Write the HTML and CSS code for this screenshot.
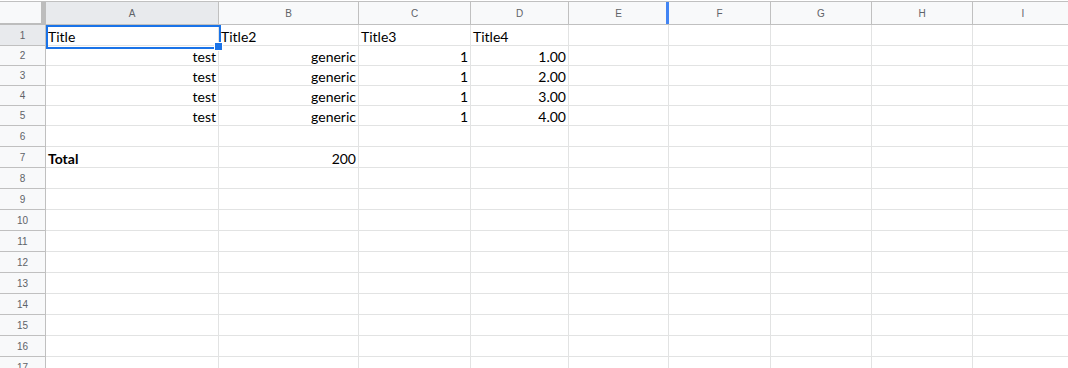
FILE: index.html
```html
<!DOCTYPE html>
<html lang="en">
<head>
  <meta charset="UTF-8" />
  <title>Sheet</title>
  <link rel="stylesheet" href="styles.css">
</head>
<body>
  <div class="sheet">
    <div class="row head">
      <div class="corner"></div>
      <div class="col sel">A</div>
      <div class="col">B</div>
      <div class="col">C</div>
      <div class="col">D</div>
      <div class="col resize">E</div>
      <div class="col">F</div>
      <div class="col">G</div>
      <div class="col">H</div>
      <div class="col">I</div>
    </div>
    <div class="row tall">
      <div class="num sel">1</div>
      <div class="cell active">Title</div>
      <div class="cell">Title2</div>
      <div class="cell">Title3</div>
      <div class="cell">Title4</div>
      <div class="cell"></div><div class="cell"></div><div class="cell"></div><div class="cell"></div><div class="cell"></div>
    </div>
    <div class="row">
      <div class="num">2</div>
      <div class="cell r">test</div>
      <div class="cell r">generic</div>
      <div class="cell r">1</div>
      <div class="cell r">1.00</div>
      <div class="cell"></div><div class="cell"></div><div class="cell"></div><div class="cell"></div><div class="cell"></div>
    </div>
    <div class="row">
      <div class="num">3</div>
      <div class="cell r">test</div>
      <div class="cell r">generic</div>
      <div class="cell r">1</div>
      <div class="cell r">2.00</div>
      <div class="cell"></div><div class="cell"></div><div class="cell"></div><div class="cell"></div><div class="cell"></div>
    </div>
    <div class="row">
      <div class="num">4</div>
      <div class="cell r">test</div>
      <div class="cell r">generic</div>
      <div class="cell r">1</div>
      <div class="cell r">3.00</div>
      <div class="cell"></div><div class="cell"></div><div class="cell"></div><div class="cell"></div><div class="cell"></div>
    </div>
    <div class="row">
      <div class="num">5</div>
      <div class="cell r">test</div>
      <div class="cell r">generic</div>
      <div class="cell r">1</div>
      <div class="cell r">4.00</div>
      <div class="cell"></div><div class="cell"></div><div class="cell"></div><div class="cell"></div><div class="cell"></div>
    </div>
    <div class="row tall">
      <div class="num">6</div>
      <div class="cell"></div><div class="cell"></div><div class="cell"></div><div class="cell"></div><div class="cell"></div><div class="cell"></div><div class="cell"></div><div class="cell"></div><div class="cell"></div>
    </div>
    <div class="row tall">
      <div class="num">7</div>
      <div class="cell b">Total</div>
      <div class="cell r">200</div>
      <div class="cell"></div><div class="cell"></div><div class="cell"></div><div class="cell"></div><div class="cell"></div><div class="cell"></div><div class="cell"></div>
    </div>
    <div class="row tall"><div class="num">8</div><div class="cell"></div><div class="cell"></div><div class="cell"></div><div class="cell"></div><div class="cell"></div><div class="cell"></div><div class="cell"></div><div class="cell"></div><div class="cell"></div></div>
    <div class="row tall"><div class="num">9</div><div class="cell"></div><div class="cell"></div><div class="cell"></div><div class="cell"></div><div class="cell"></div><div class="cell"></div><div class="cell"></div><div class="cell"></div><div class="cell"></div></div>
    <div class="row tall"><div class="num">10</div><div class="cell"></div><div class="cell"></div><div class="cell"></div><div class="cell"></div><div class="cell"></div><div class="cell"></div><div class="cell"></div><div class="cell"></div><div class="cell"></div></div>
    <div class="row tall"><div class="num">11</div><div class="cell"></div><div class="cell"></div><div class="cell"></div><div class="cell"></div><div class="cell"></div><div class="cell"></div><div class="cell"></div><div class="cell"></div><div class="cell"></div></div>
    <div class="row tall"><div class="num">12</div><div class="cell"></div><div class="cell"></div><div class="cell"></div><div class="cell"></div><div class="cell"></div><div class="cell"></div><div class="cell"></div><div class="cell"></div><div class="cell"></div></div>
    <div class="row tall"><div class="num">13</div><div class="cell"></div><div class="cell"></div><div class="cell"></div><div class="cell"></div><div class="cell"></div><div class="cell"></div><div class="cell"></div><div class="cell"></div><div class="cell"></div></div>
    <div class="row tall"><div class="num">14</div><div class="cell"></div><div class="cell"></div><div class="cell"></div><div class="cell"></div><div class="cell"></div><div class="cell"></div><div class="cell"></div><div class="cell"></div><div class="cell"></div></div>
    <div class="row tall"><div class="num">15</div><div class="cell"></div><div class="cell"></div><div class="cell"></div><div class="cell"></div><div class="cell"></div><div class="cell"></div><div class="cell"></div><div class="cell"></div><div class="cell"></div></div>
    <div class="row tall"><div class="num">16</div><div class="cell"></div><div class="cell"></div><div class="cell"></div><div class="cell"></div><div class="cell"></div><div class="cell"></div><div class="cell"></div><div class="cell"></div><div class="cell"></div></div>
    <div class="row tall"><div class="num">17</div><div class="cell"></div><div class="cell"></div><div class="cell"></div><div class="cell"></div><div class="cell"></div><div class="cell"></div><div class="cell"></div><div class="cell"></div><div class="cell"></div></div>
  </div>
</body>
</html>
```

FILE: styles.css
```css
* {
  box-sizing: border-box;
  margin: 0;
  padding: 0;
}
html, body {
  height: 100%;
  overflow: hidden;
  background: #ffffff;
}
.sheet {
  width: 1074px;
  padding-top: 1px;
}
.row {
  display: grid;
  grid-template-columns: 46px 173px 140px 112px 98px 100px 102px 101px 101px 101px;
  height: 20px;
}
.row.tall {
  height: 21px;
}
.head {
  height: 24px;
  border-top: 1px solid #c0c0c0;
}
.corner {
  background: #f8f9fa;
  border-right: 5px solid #bdbdbd;
  border-bottom: 2px solid #bdbdbd;
}
.col {
  position: relative;
  background: #f8f9fa;
  border-right: 1px solid #c0c0c0;
  border-bottom: 1px solid #c0c0c0;
  font-family: "Liberation Sans", Arial, sans-serif;
  font-size: 10px;
  color: #5f6368;
  display: flex;
  align-items: center;
  justify-content: center;
}
.col.sel, .num.sel {
  background: #e8eaed;
}
.col.resize::after {
  content: "";
  position: absolute;
  top: 0;
  bottom: 0;
  right: -2px;
  width: 4px;
  background: #4285f4;
}
.num {
  background: #f8f9fa;
  border-right: 1px solid #c0c0c0;
  border-bottom: 1px solid #c0c0c0;
  font-family: "Liberation Sans", Arial, sans-serif;
  font-size: 10px;
  color: #5f6368;
  display: flex;
  align-items: center;
  justify-content: center;
}
.cell {
  position: relative;
  border-right: 1px solid #e2e3e3;
  border-bottom: 1px solid #e2e3e3;
  font-family: Lato, "Open Sans", sans-serif;
  font-size: 14px;
  line-height: 16px;
  color: #000000;
  display: flex;
  align-items: flex-end;
  padding: 0 2px 0 2px;
  white-space: nowrap;
}
.cell.r {
  justify-content: flex-end;
}
.cell.b {
  font-weight: bold;
}
.cell.active::before {
  content: "";
  position: absolute;
  left: 0;
  top: 0;
  width: 171px;
  height: 20px;
  border: 2px solid #1a73e8;
}
.cell.active::after {
  content: "";
  position: absolute;
  left: 168px;
  top: 17px;
  width: 7px;
  height: 7px;
  background: #1a73e8;
  border: 1px solid #ffffff;
  z-index: 2;
}
```
